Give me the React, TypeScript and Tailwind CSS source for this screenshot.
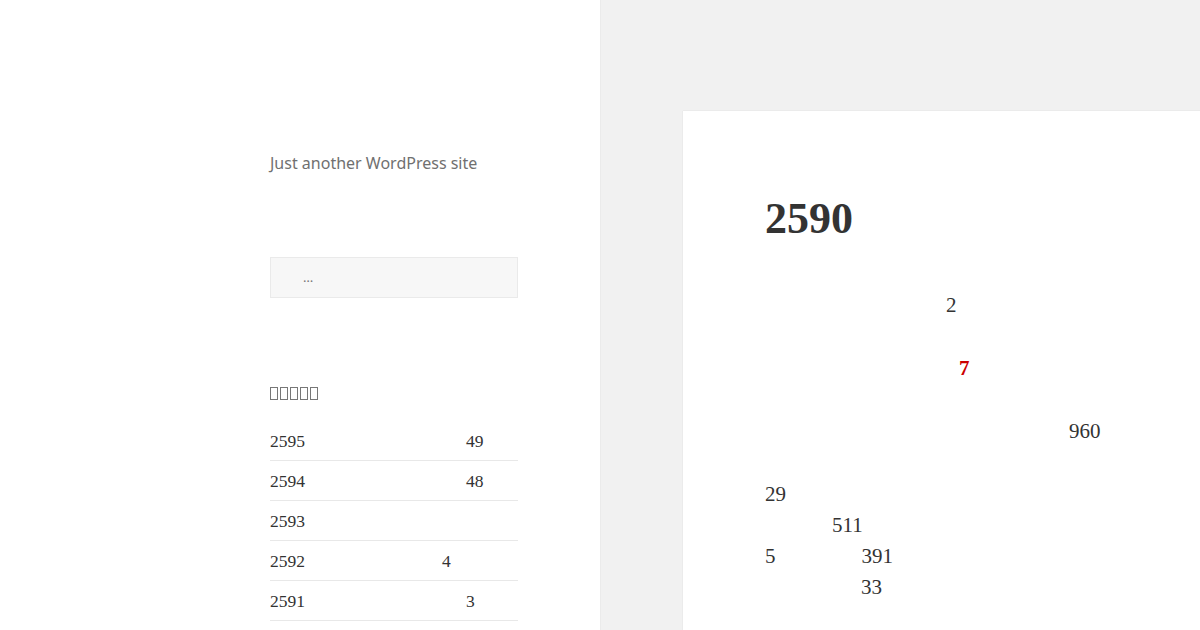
const recent = [
  { n: "2595", c: "49", gap: "ml-[161px]" },
  { n: "2594", c: "48", gap: "ml-[161px]" },
  { n: "2593", c: "", gap: "" },
  { n: "2592", c: "4", gap: "ml-[137px]" },
  { n: "2591", c: "3", gap: "ml-[161px]" },
];

function Tofu({ count }: { count: number }) {
  return (
    <div className="flex gap-[2px]" aria-label="近期文章">
      {Array.from({ length: count }).map((_, i) => (
        <span key={i} className="inline-block w-[8px] h-[13px] border border-[#777]" />
      ))}
    </div>
  );
}

export default function App() {
  return (
    <div className="flex h-[630px] w-[1200px] overflow-hidden bg-[#f1f1f1] text-[#333]">
      <aside className="w-[600px] shrink-0 bg-white shadow-[0_0_1px_rgba(0,0,0,0.15)] pl-[270px] pr-[82px] pt-[151px]">
        <p className="font-['Noto_Sans',sans-serif] text-[16px] leading-[24px] text-[#707070]">
          Just another WordPress site
        </p>

        <div className="mt-[82px] h-[41px] border border-[#eaeaea] bg-[#f7f7f7] flex items-center pl-[32px] font-['Noto_Sans',sans-serif] text-[13px] text-[#777]">
          …
        </div>

        <div className="mt-[89px]">
          <Tofu count={5} />
        </div>

        <ul className="mt-[21px] font-['Liberation_Serif',serif] text-[17.5px]">
          {recent.map((r) => (
            <li key={r.n} className="h-[40px] pt-[1px] leading-[39px] border-b border-[#e8e8e8] flex">
              <span>{r.n}</span>
              {r.c && <span className={r.gap}>{r.c}</span>}
            </li>
          ))}
        </ul>
      </aside>

      <main className="flex-1 pl-[83px] pt-[111px]">
        <article className="h-full bg-white shadow-[0_0_1px_rgba(0,0,0,0.15)] pl-[82px] pt-[84px] font-['Liberation_Serif',serif] text-[21px] leading-[31px]">
          <h1 className="text-[44px] leading-[48px] font-bold mb-[47px]">2590</h1>
          <p className="pl-[181px] mb-[32px]">2</p>
          <p className="pl-[194px] mb-[32px] font-bold text-[#cc0000]">7</p>
          <p className="pl-[304px] mb-[32px]">960</p>
          <p>
            <span className="block">29</span>
            <span className="block pl-[67px]">511</span>
            <span className="block">
              5<span className="ml-[86px]">391</span>
            </span>
            <span className="block pl-[96px]">33</span>
          </p>
        </article>
      </main>
    </div>
  );
}
